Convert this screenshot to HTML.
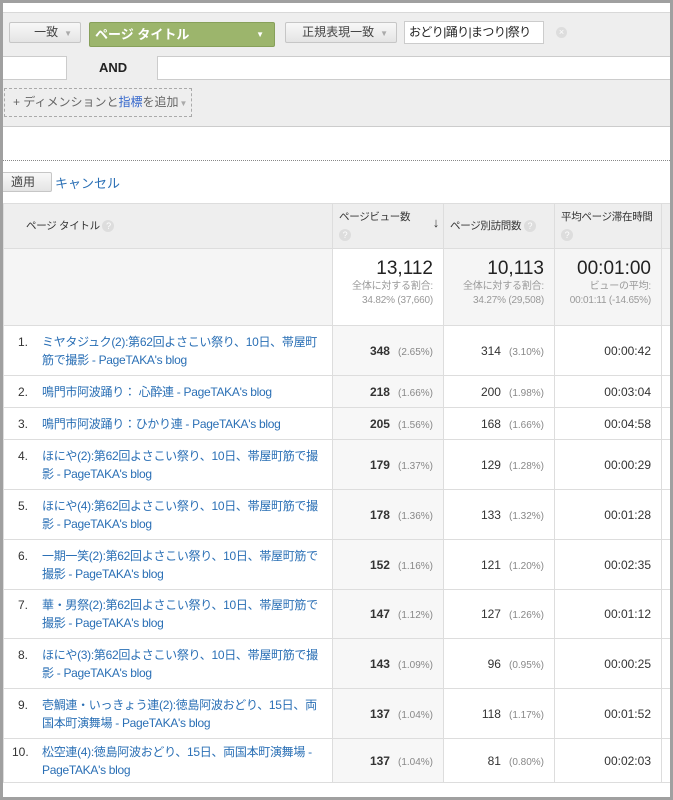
<!DOCTYPE html>
<html><head><meta charset="utf-8"><style>
*{box-sizing:border-box;margin:0;padding:0}
body{width:673px;height:800px;background:#a0a0a0;font-family:"Liberation Sans","Noto Sans CJK JP",sans-serif;font-size:12px;color:#333;position:relative;overflow:hidden}
.page{position:absolute;left:3px;top:3px;width:667px;height:794px;background:#fff;overflow:hidden}
.abs{position:absolute}
.panel{left:0;top:9px;width:667px;height:115px;background:#eee;border-top:1px solid #d8d8d8;border-bottom:1px solid #ccc}
.btn{background:linear-gradient(#f8f8f8,#e4e4e4);border:1px solid #c6c6c6;border-radius:2px;color:#444;font-size:12px;line-height:19px;text-align:right;padding-right:8px}
.arr{color:#aaa;font-size:8px;margin-left:6px}
table{position:absolute;left:0;top:200px;border-collapse:collapse;width:672px;table-layout:fixed}
td,th{border:1px solid #ddd;vertical-align:middle;overflow:hidden}
th{background:#eee;height:45px;font-weight:normal;font-size:10.5px;text-align:left;vertical-align:top;padding:6px 4px 0 6px;color:#333;white-space:nowrap;line-height:14px;letter-spacing:-0.3px}
.q{display:inline-block;width:12px;height:12px;border-radius:6px;background:#ddd;color:#fff;font-size:9px;text-align:center;line-height:12px;vertical-align:middle}
.tot td{height:77px;background:#f5f5f5;text-align:right;padding-right:10px;vertical-align:top;padding-top:9px}
.big{font-size:19px;color:#222;line-height:22px}
.sm{font-size:10px;color:#999;line-height:14px;white-space:nowrap;letter-spacing:-0.2px}
.r td{font-size:12px;padding-top:0;padding-bottom:0}
.r td.t{padding-left:14px;color:#333;white-space:nowrap}
.t span.n{display:inline-block;width:24px;vertical-align:top;line-height:18px}
.t a{color:#2a6fb5;text-decoration:none;display:inline-block;width:280px;vertical-align:top;line-height:18px;letter-spacing:-0.3px;white-space:normal}
.pv{background:#f7f7f7;text-align:right;padding-right:10px;font-weight:bold}
.vv{text-align:right;padding-right:10px}
.p{font-weight:normal;font-size:10px;color:#888;margin-left:8px}
.tm{text-align:right;padding-right:10px}
</style></head><body><div class="page">
<div class="abs panel"></div>
<div class="abs btn" style="left:6px;top:19px;width:72px;height:21px">一致<span class="arr">▼</span></div>
<div class="abs" style="left:86px;top:19px;width:186px;height:25px;background:#9cb56c;border:1px solid #87a05a;border-radius:2px;color:#fff;font-weight:bold;font-size:13px;line-height:23px;padding-left:5px">ページ タイトル<span style="position:absolute;right:10px;font-size:8px">▼</span></div>
<div class="abs btn" style="left:282px;top:19px;width:112px;height:21px">正規表現一致<span class="arr">▼</span></div>
<div class="abs" style="left:401px;top:18px;width:140px;height:23px;background:#fff;border:1px solid #ccc;font-size:12px;line-height:21px;padding-left:4px;color:#222;letter-spacing:-0.6px;white-space:nowrap;overflow:hidden">おどり|踊り|まつり|祭り</div>
<div class="abs" style="left:553px;top:24px;width:11px;height:11px;border-radius:6px;background:#ddd;color:#fff;font-size:9px;line-height:11px;text-align:center">×</div>
<div class="abs" style="left:-3px;top:53px;width:67px;height:24px;background:#fff;border:1px solid #ccc"></div>
<div class="abs" style="left:96px;top:57px;font-weight:bold;font-size:13px;color:#222">AND</div>
<div class="abs" style="left:154px;top:53px;width:520px;height:24px;background:#fff;border:1px solid #ccc"></div>
<div class="abs" style="left:1px;top:85px;width:188px;height:29px;border:1px dashed #aaa;font-size:12px;line-height:27px;padding-left:8px;color:#666;white-space:nowrap">+ ディメンションと<b style="color:#3366cc;font-weight:normal">指標</b>を追加<span class="arr" style="margin-left:1px">▼</span></div>
<div class="abs" style="left:0;top:157px;width:667px;border-top:1px dotted #888"></div>
<div class="abs btn" style="left:-3px;top:169px;width:52px;height:20px;text-align:left;padding-left:10px">適用</div>
<div class="abs" style="left:52px;top:170px;color:#2a6fb5;font-size:13px">キャンセル</div>
<table>
<colgroup><col style="width:329px"><col style="width:111px"><col style="width:111px"><col style="width:107px"><col></colgroup>
<tr><th style="padding:15px 0 0 22px">ページ タイトル <span class="q">?</span></th>
<th>ページビュー数<span style="float:right;font-size:13px;margin-top:6px">↓</span><br><span class="q" style="margin-top:5px">?</span></th>
<th style="padding-top:15px">ページ別訪問数 <span class="q">?</span></th>
<th>平均ページ滞在時間<br><span class="q" style="margin-top:5px">?</span></th>
<th style="padding:0"></th></tr>
<tr class="tot"><td style="background:#f5f5f5"></td><td style="background:#fff"><div class="big">13,112</div><div class="sm">全体に対する割合:<br>34.82% (37,660)</div></td><td><div class="big">10,113</div><div class="sm">全体に対する割合:<br>34.27% (29,508)</div></td><td><div class="big">00:01:00</div><div class="sm">ビューの平均:<br>00:01:11 (-14.65%)</div></td><td></td></tr>
<tr class="r" style="height:50px"><td class="t"><span class="n">1.</span><a>ミヤタジュク(2):第62回よさこい祭り、10日、帯屋町筋で撮影 - PageTAKA's blog</a></td><td class="pv">348<span class="p">(2.65%)</span></td><td class="vv">314<span class="p">(3.10%)</span></td><td class="tm">00:00:42</td><td></td></tr>
<tr class="r" style="height:32px"><td class="t"><span class="n">2.</span><a>鳴門市阿波踊り： 心酔連 - PageTAKA's blog</a></td><td class="pv">218<span class="p">(1.66%)</span></td><td class="vv">200<span class="p">(1.98%)</span></td><td class="tm">00:03:04</td><td></td></tr>
<tr class="r" style="height:32px"><td class="t"><span class="n">3.</span><a>鳴門市阿波踊り：ひかり連 - PageTAKA's blog</a></td><td class="pv">205<span class="p">(1.56%)</span></td><td class="vv">168<span class="p">(1.66%)</span></td><td class="tm">00:04:58</td><td></td></tr>
<tr class="r" style="height:50px"><td class="t"><span class="n">4.</span><a>ほにや(2):第62回よさこい祭り、10日、帯屋町筋で撮影 - PageTAKA's blog</a></td><td class="pv">179<span class="p">(1.37%)</span></td><td class="vv">129<span class="p">(1.28%)</span></td><td class="tm">00:00:29</td><td></td></tr>
<tr class="r" style="height:50px"><td class="t"><span class="n">5.</span><a>ほにや(4):第62回よさこい祭り、10日、帯屋町筋で撮影 - PageTAKA's blog</a></td><td class="pv">178<span class="p">(1.36%)</span></td><td class="vv">133<span class="p">(1.32%)</span></td><td class="tm">00:01:28</td><td></td></tr>
<tr class="r" style="height:50px"><td class="t"><span class="n">6.</span><a>一期一笑(2):第62回よさこい祭り、10日、帯屋町筋で撮影 - PageTAKA's blog</a></td><td class="pv">152<span class="p">(1.16%)</span></td><td class="vv">121<span class="p">(1.20%)</span></td><td class="tm">00:02:35</td><td></td></tr>
<tr class="r" style="height:49px"><td class="t"><span class="n">7.</span><a>華・男祭(2):第62回よさこい祭り、10日、帯屋町筋で撮影 - PageTAKA's blog</a></td><td class="pv">147<span class="p">(1.12%)</span></td><td class="vv">127<span class="p">(1.26%)</span></td><td class="tm">00:01:12</td><td></td></tr>
<tr class="r" style="height:50px"><td class="t"><span class="n">8.</span><a>ほにや(3):第62回よさこい祭り、10日、帯屋町筋で撮影 - PageTAKA's blog</a></td><td class="pv">143<span class="p">(1.09%)</span></td><td class="vv">96<span class="p">(0.95%)</span></td><td class="tm">00:00:25</td><td></td></tr>
<tr class="r" style="height:50px"><td class="t"><span class="n">9.</span><a>壱鯛連・いっきょう連(2):徳島阿波おどり、15日、両国本町演舞場 - PageTAKA's blog</a></td><td class="pv">137<span class="p">(1.04%)</span></td><td class="vv">118<span class="p">(1.17%)</span></td><td class="tm">00:01:52</td><td></td></tr>
<tr class="r" style="height:44px"><td class="t" style="padding-left:8px"><span class="n" style="width:30px">10.</span><a>松空連(4):徳島阿波おどり、15日、両国本町演舞場 - PageTAKA's blog</a></td><td class="pv">137<span class="p">(1.04%)</span></td><td class="vv">81<span class="p">(0.80%)</span></td><td class="tm">00:02:03</td><td></td></tr>
</table>
</div></body></html>
